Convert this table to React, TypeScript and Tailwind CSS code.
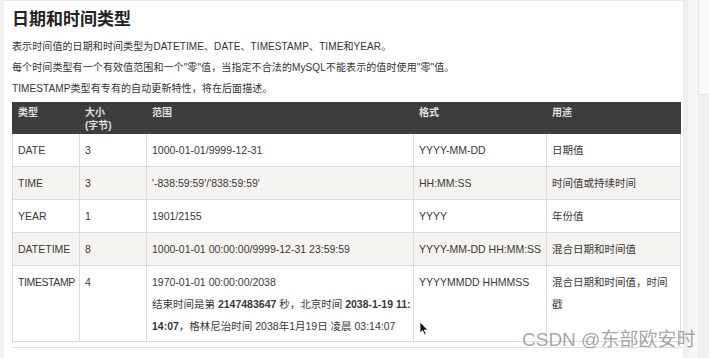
import React from "react"

const font = { fontFamily: '"Liberation Sans", "Noto Sans CJK SC", sans-serif' }

const rows = [
  { type: "DATE", size: "3", range: "1000-01-01/9999-12-31", fmt: "YYYY-MM-DD", use: "日期值" },
  { type: "TIME", size: "3", range: "'-838:59:59'/'838:59:59'", fmt: "HH:MM:SS", use: "时间值或持续时间" },
  { type: "YEAR", size: "1", range: "1901/2155", fmt: "YYYY", use: "年份值" },
  {
    type: "DATETIME",
    size: "8",
    range: "1000-01-01 00:00:00/9999-12-31 23:59:59",
    fmt: "YYYY-MM-DD HH:MM:SS",
    use: "混合日期和时间值",
  },
]

function Cursor() {
  return (
    <svg width="10" height="15" viewBox="0 0 10 15" className="absolute left-[419px] top-[321px]">
      <path d="M1 1 L1 12 L3.6 9.6 L5.6 14 L7.2 13.3 L5.3 9 L8.8 9 Z" fill="#111" stroke="#fff" strokeWidth="0.8" />
    </svg>
  )
}

export default function App() {
  return (
    <div className="relative w-[709px] h-[358px] overflow-hidden flex bg-[#f3f3f3]" style={font}>
      <div className="w-[4px] shrink-0 bg-[#f2f2f2]" />
      <div className="w-[679px] shrink-0 bg-white pl-[8px] pr-[3px] border-t border-[#ebebeb]">
        <h2 className="mt-[7px] text-[17px] leading-[24px] font-bold text-[#222]">日期和时间类型</h2>
        <div className="mt-[4px] text-[10px] leading-[21px] text-[#333] tracking-[0.1px]">
          <p>表示时间值的日期和时间类型为DATETIME、DATE、TIMESTAMP、TIME和YEAR。</p>
          <p>每个时间类型有一个有效值范围和一个"零"值，当指定不合法的MySQL不能表示的值时使用"零"值。</p>
          <p>TIMESTAMP类型有专有的自动更新特性，将在后面描述。</p>
        </div>
        <table className="mt-[3px] w-[668px] table-fixed border-collapse text-[10.5px] text-[#383838]">
          <colgroup>
            <col className="w-[67px]" />
            <col className="w-[67px]" />
            <col className="w-[267px]" />
            <col className="w-[133px]" />
            <col className="w-[134px]" />
          </colgroup>
          <thead>
            <tr className="bg-[#3d3d3d] text-[#e0e0e0] text-[10px] font-bold text-left align-top">
              <th className="px-[5px] pt-[3px] pb-[1px] leading-[13px] h-[30px] border border-[#3d3d3d]">类型</th>
              <th className="px-[5px] pt-[3px] pb-[1px] leading-[13px] border border-[#3d3d3d]">
                大小
                <br />
                (字节)
              </th>
              <th className="px-[5px] pt-[3px] pb-[1px] leading-[13px] border border-[#3d3d3d]">范围</th>
              <th className="px-[5px] pt-[3px] pb-[1px] leading-[13px] border border-[#3d3d3d]">格式</th>
              <th className="px-[5px] pt-[3px] pb-[1px] leading-[13px] border border-[#3d3d3d]">用途</th>
            </tr>
          </thead>
          <tbody>
            {rows.map((r, i) => (
              <tr key={r.type} className={i % 2 === 1 ? "bg-[#f6f4f1]" : "bg-white"}>
                <td className="px-[5px] pt-[5px] pb-[5px] leading-[22px] border border-[#dcdcdc] whitespace-nowrap">{r.type}</td>
                <td className="px-[5px] pt-[5px] pb-[5px] leading-[22px] border border-[#dcdcdc]">{r.size}</td>
                <td className="px-[5px] pt-[5px] pb-[5px] leading-[22px] border border-[#dcdcdc] whitespace-nowrap">{r.range}</td>
                <td className="px-[5px] pt-[5px] pb-[5px] leading-[22px] border border-[#dcdcdc] whitespace-nowrap">{r.fmt}</td>
                <td className="px-[5px] pt-[5px] pb-[5px] leading-[22px] border border-[#dcdcdc]">{r.use}</td>
              </tr>
            ))}
            <tr className="bg-white align-top">
              <td className="px-[5px] pt-[5px] pb-[4px] leading-[22px] border border-[#dcdcdc] whitespace-nowrap tracking-[-0.4px]">TIMESTAMP</td>
              <td className="px-[5px] pt-[5px] pb-[4px] leading-[22px] border border-[#dcdcdc]">4</td>
              <td className="px-[5px] pt-[5px] pb-[4px] leading-[22px] border border-[#dcdcdc] whitespace-nowrap">
                1970-01-01 00:00:00/2038
                <br />
                结束时间是第 <b>2147483647</b> 秒，北京时间 <b>2038-1-19 11:</b>
                <br />
                <b>14:07</b>，格林尼治时间 2038年1月19日 凌晨 03:14:07
              </td>
              <td className="px-[5px] pt-[5px] pb-[4px] leading-[22px] border border-[#dcdcdc] whitespace-nowrap">YYYYMMDD HHMMSS</td>
              <td className="px-[5px] pt-[5px] pb-[4px] leading-[22px] border border-[#dcdcdc] whitespace-nowrap">
                混合日期和时间值，时间
                <br />
                戳
              </td>
            </tr>
          </tbody>
        </table>
        <div className="mt-[5px] h-px w-[671px] bg-[#e2e2e2]" />
        <h2 className="mt-[8px] text-[17px] leading-[24px] font-bold text-[#222]">存储的需求</h2>
      </div>
      <div className="flex-1 flex">
        <div className="w-[5px] bg-[#efefef]" />
        <div className="w-[10px] bg-[#f8f8f8]" />
        <div className="flex-1 flex flex-col">
          <div className="h-[95px] bg-[#fafafa] border-l border-b border-[#e6e6e6]" />
          <div className="flex-1 bg-[#f1f1f1]" />
        </div>
      </div>
      <div className="absolute left-[522px] top-[328px] text-[19px] leading-[24px] text-[#8f8f8f]/80 whitespace-nowrap">
        CSDN @东部欧安时
      </div>
      <Cursor />
    </div>
  )
}
